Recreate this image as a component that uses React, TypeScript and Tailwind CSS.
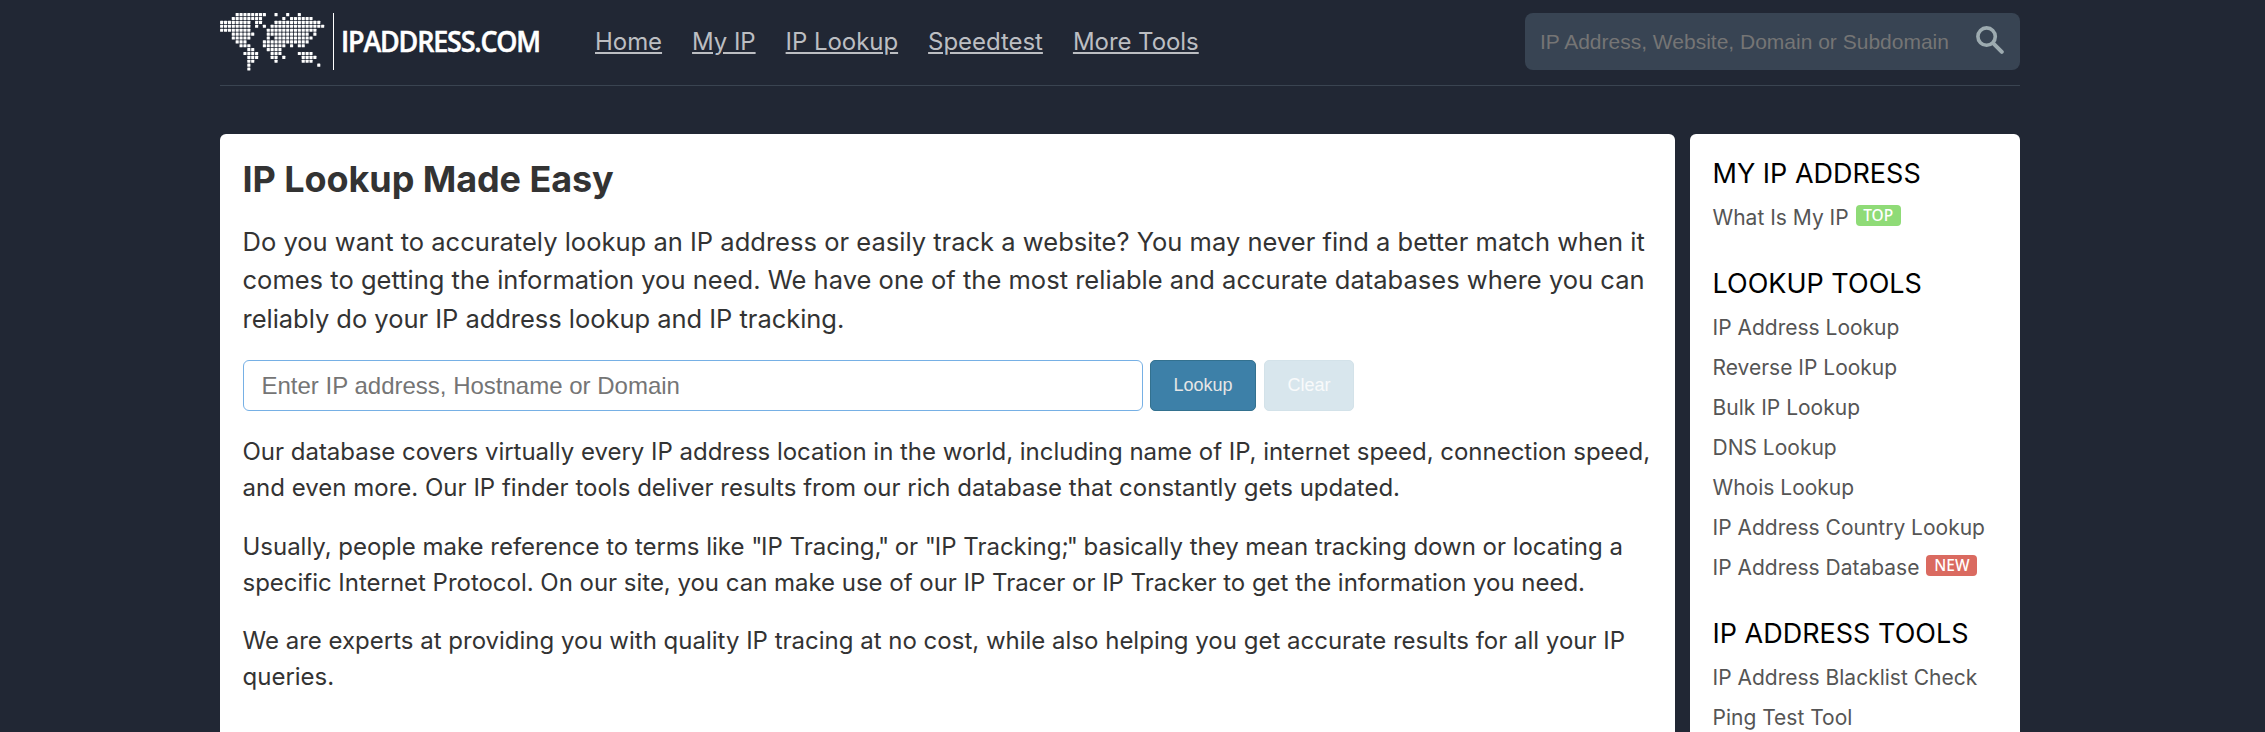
import React from "react";

const MAP_ROWS = [
  "....########..#..#..#......",
  "...########.....#.######...",
  "########.##...############.",
  "########.#.#.##############",
  "########....#############..",
  "...######...###########.#..",
  "...#####....#.##########...",
  "....###....############....",
  ".....###...######.#.##.....",
  ".......##...####...........",
  "......####...###....####...",
  ".......###...##.#....####..",
  ".......##.....#......###...",
  ".......#.................#.",
  ".......#...................",
];

const PITCH = 3.885;

function WorldMap() {
  return (
    <svg width="106" height="58" viewBox="0 0 106 58" fill="#fff" className="shrink-0">
      {MAP_ROWS.flatMap((row, r) =>
        [...row].map((cell, c) =>
          cell === "#" ? (
            <rect key={`${r}-${c}`} x={0.1 + c * PITCH} y={0.1 + r * PITCH} width="3.1" height="3.1" rx="0.5" />
          ) : null
        )
      )}
    </svg>
  );
}

function SearchIcon() {
  return (
    <svg width="28" height="28" viewBox="0 0 28 28" fill="none" stroke="#9dabb0" strokeLinecap="round">
      <circle cx="10.6" cy="10.6" r="8.7" strokeWidth="3.6" />
      <path d="M17.3 17.3 L25.8 25.8" strokeWidth="4" />
    </svg>
  );
}

const NAV = ["Home", "My IP", "IP Lookup", "Speedtest", "More Tools"];

type Item = { label: string; badge?: string; badgeClass?: string };

const SECTIONS: { title: string; items: Item[] }[] = [
  { title: "MY IP ADDRESS", items: [{ label: "What Is My IP", badge: "TOP", badgeClass: "w-[45px] bg-[#8fdb77]" }] },
  {
    title: "LOOKUP TOOLS",
    items: [
      { label: "IP Address Lookup" },
      { label: "Reverse IP Lookup" },
      { label: "Bulk IP Lookup" },
      { label: "DNS Lookup" },
      { label: "Whois Lookup" },
      { label: "IP Address Country Lookup" },
      { label: "IP Address Database", badge: "NEW", badgeClass: "w-[51px] bg-[#da6a60]" },
    ],
  },
  { title: "IP ADDRESS TOOLS", items: [{ label: "IP Address Blacklist Check" }, { label: "Ping Test Tool" }] },
];

function Header() {
  return (
    <header className="flex h-[86px] items-start border-b border-[#3a4451] pt-[13px]">
      <a className="flex h-[57px] items-center">
        <WorldMap />
        <span className="ml-[7px] h-[57px] w-px bg-white" />
        <span className="mb-[2px] ml-[7px] w-[200px] origin-left scale-x-[0.96] whitespace-nowrap font-['Open_Sans'] text-[28px] font-semibold tracking-[-1.2px] text-white [-webkit-text-stroke:0.5px_#fff]">
          IPADDRESS.COM
        </span>
      </a>
      <nav className="ml-[54px] flex h-[57px] items-center gap-[30px]">
        {NAV.map((n) => (
          <a key={n} className="whitespace-nowrap text-[24px] tracking-[-0.05px] text-[#bcbec2] underline">
            {n}
          </a>
        ))}
      </nav>
      <div className="ml-auto flex h-[57px] w-[495px] items-center rounded-lg bg-[#384453] pl-[15px] pr-[16px]">
        <span className="whitespace-nowrap font-['Liberation_Sans'] text-[21px] text-[#757575]">
          IP Address, Website, Domain or Subdomain
        </span>
        <span className="mb-[3px] ml-auto">
          <SearchIcon />
        </span>
      </div>
    </header>
  );
}

function Quote() {
  return <span className="tracking-[-1.2px]">"</span>;
}

export default function App() {
  return (
    <div className="h-[732px] overflow-hidden bg-[#212734] font-['Inter',sans-serif] text-[#333]">
      <div className="ml-[220px] w-[1800px]">
        <Header />
        <div className="mt-[48px] flex gap-[15px]">
          <main className="h-[620px] w-[1455px] rounded-md bg-white px-[23px] pt-[22px]">
            <h1 className="-ml-[0.5px] text-[36px] leading-[46px] font-bold tracking-[-0.08px]">IP Lookup Made Easy</h1>
            <p className="-ml-[0.5px] mt-[21px] whitespace-nowrap text-[25.5px] leading-[38.4px]">
              <span className="tracking-[0.015px]">
                Do you want to accurately lookup an IP address or easily track a website? You may never find a better match when it
              </span>
              <br />
              <span className="tracking-[0.015px]">
                comes to getting the information you need. We have one of the most reliable and accurate databases where you can
              </span>
              <br />
              <span className="tracking-[-0.03px]">reliably do your IP address lookup and IP tracking.</span>
            </p>
            <div className="mt-[22px] flex h-[51px]">
              <div className="flex w-[900px] items-center rounded-md border border-[#76b0e5] pl-[17.5px] font-['Liberation_Sans'] text-[24px] text-[#757575]">
                Enter IP address, Hostname or Domain
              </div>
              <button className="ml-[7px] w-[106px] rounded-[5px] border border-[#33718f] bg-[#3d80a8] font-['Liberation_Sans'] text-[18px] text-[#e6e6e6]">
                Lookup
              </button>
              <button className="ml-[8px] w-[90px] rounded-[5px] border border-[#d3e2e9] bg-[#d8e6ed] font-['Liberation_Sans'] text-[18px] text-[#f8fafb]">
                Clear
              </button>
            </div>
            <div className="-ml-[0.5px] mt-[23px] flex flex-col gap-[22.4px] whitespace-nowrap text-[24px] leading-[36px]">
              <p>
                <span className="tracking-[-0.02px]">
                  Our database covers virtually every IP address location in the world, including name of IP, internet speed, connection speed,
                </span>
                <br />
                <span className="tracking-[0.015px]">
                  and even more. Our IP finder tools deliver results from our rich database that constantly gets updated.
                </span>
              </p>
              <p>
                <span className="tracking-[-0.02px]">
                  Usually, people make reference to terms like <Quote />
                  IP Tracing<span className="tracking-[-3.4px]">,</span>
                  <Quote /> or <Quote />
                  IP Tracking<span className="tracking-[-1.8px]">;</span>
                  <Quote /> basically they mean tracking down or locating a
                </span>
                <br />
                <span className="tracking-[-0.02px]">
                  specific Internet Protocol. On our site, you can make use of our IP Tracer or IP Tracker to get the information you need.
                </span>
              </p>
              <p>
                We are experts at providing you with quality IP tracing at no cost, while also helping you get accurate results for all your IP
                <br />
                queries.
              </p>
            </div>
          </main>
          <aside className="flex h-[620px] w-[330px] flex-col gap-[26px] rounded-md bg-white pl-[22.5px] pt-[20px]">
            {SECTIONS.map((s) => (
              <section key={s.title}>
                <h2 className="mb-[4px] whitespace-nowrap text-[27px] leading-[40px] text-black">{s.title}</h2>
                {s.items.map((i) => (
                  <a key={i.label} className="flex h-[40px] items-center whitespace-nowrap text-[21px] text-[#555]">
                    {i.label}
                    {i.badge && (
                      <span
                        className={`mb-[5px] ml-[7px] flex h-[21px] items-center justify-center rounded-[4px] font-['Noto_Sans'] text-[15.5px] font-medium text-white ${i.badgeClass}`}
                      >
                        {i.badge}
                      </span>
                    )}
                  </a>
                ))}
              </section>
            ))}
          </aside>
        </div>
      </div>
    </div>
  );
}
